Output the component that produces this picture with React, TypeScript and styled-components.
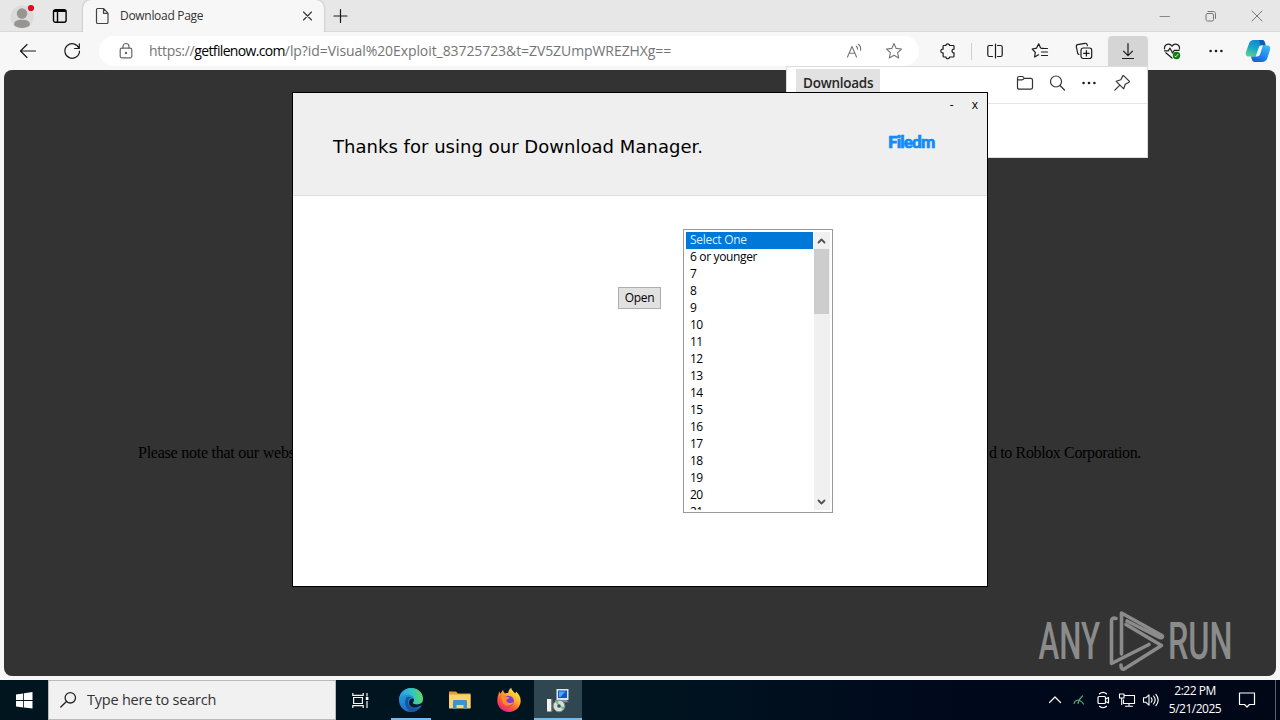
import React from "react";
import styled, { createGlobalStyle } from "styled-components";

const GlobalStyle = createGlobalStyle`
  * { box-sizing: border-box; }
  body { margin: 0; overflow: hidden; font-family: "Open Sans", "Noto Sans", sans-serif; }
`;

const Desktop = styled.div`
  position: relative;
  display: flex;
  flex-direction: column;
  width: 1280px;
  height: 720px;
  overflow: hidden;
  background: #f7f7f7;
`;

const TabStrip = styled.header`
  display: grid;
  grid-template-columns: 44px 32px 7px 241px 34px 1fr 46px 46px 46px;
  align-items: center;
  height: 32px;
  background: #e7e7e7;
  border-bottom: 1px solid #d9d9d9;
`;
const Cell = styled.div`
  display: flex;
  align-items: center;
  justify-content: center;
`;
const Tab = styled.div`
  display: flex;
  align-items: center;
  height: 32px;
  margin-bottom: -1px;
  padding: 0 10px 0 11px;
  gap: 9px;
  background: #f7f7f7;
  border-radius: 8px 8px 0 0;
  box-shadow: 0 0 2px rgba(0, 0, 0, 0.35);
  clip-path: inset(0 -3px 0 -3px);
`;
const TabTitle = styled.span`
  flex: 1;
  font-size: 12px;
  line-height: 16px;
  letter-spacing: -0.3px;
  color: #333;
  white-space: nowrap;
`;

const Toolbar = styled.nav`
  display: grid;
  grid-template-columns: 44px 44px 5px 820px 7px 44px 3px 44px 1px 44px 44px 2px 40px 2px 44px 44px 40px;
  align-items: center;
  height: 38px;
  padding-left: 6px;
  background: #f7f7f7;
`;
const AddressBar = styled.div`
  display: flex;
  align-items: center;
  height: 30px;
  padding: 0 16px 0 19px;
  background: #fff;
  border-radius: 15px;
`;
const Url = styled.span`
  flex: 1;
  margin-left: 15px;
  font-size: 14px;
  line-height: 20px;
  letter-spacing: -0.08px;
  color: #757575;
  white-space: nowrap;
`;
const Scheme = styled.span`
  letter-spacing: -0.3px;
`;
const Host = styled.span`
  letter-spacing: -0.66px;
  color: #000;
`;
const Divider = styled.div`
  width: 1px;
  height: 17px;
  background: #cfcfcf;
`;
const ActiveTool = styled(Cell)`
  height: 30px;
  background: #d5d5d5;
  border-radius: 4px 4px 0 0;
`;

const Viewport = styled.main`
  display: flex;
  align-items: flex-start;
  justify-content: space-between;
  width: 1272px;
  height: 606px;
  margin: 0 4px 4px;
  padding: 374px 135px 0 134px;
  background: #333;
  border-radius: 8px;
`;
const Notice = styled.span<{ $spacing: string }>`
  font-family: "Liberation Serif", serif;
  font-size: 16px;
  line-height: 18px;
  letter-spacing: ${(p) => p.$spacing};
  color: #000;
  white-space: nowrap;
`;

const Flyout = styled.section`
  position: absolute;
  left: 786px;
  top: 66px;
  width: 362px;
  height: 92px;
  background: #fff;
  border: 1px solid #dcdcdc;
`;
const FlyoutHeader = styled.div`
  display: grid;
  grid-template-columns: 84px 1fr 32px 32px 32px 33px;
  height: 37px;
  padding: 2px 9px 0 9px;
  border-bottom: 1px solid #e4e4e4;
`;
const FlyoutTitle = styled.h2`
  height: 30px;
  margin: 0;
  padding-left: 7px;
  background: #e2e2e2;
  color: #262626;
  font-size: 13.5px;
  font-weight: 600;
  letter-spacing: -0.25px;
  line-height: 28px;
`;
const FlyoutCell = styled(Cell)`
  height: 28px;
`;

const Dialog = styled.section`
  position: absolute;
  left: 292px;
  top: 92px;
  width: 696px;
  height: 495px;
  background: #fff;
  border: 1px solid #000;
`;
const DialogHeader = styled.header`
  display: flex;
  justify-content: space-between;
  height: 103px;
  padding-left: 40px;
  background: #efefef;
  border-bottom: 1px solid #dfdfdf;
`;
const Headline = styled.h1`
  margin: 42px 0 0;
  font-family: "DejaVu Sans", sans-serif;
  font-size: 18px;
  font-weight: 400;
  line-height: 24px;
  letter-spacing: 0.03px;
  color: #000;
  white-space: nowrap;
`;
const HeaderSide = styled.div`
  display: flex;
  flex-direction: column;
  width: 100px;
`;
const Controls = styled.div`
  display: flex;
  justify-content: flex-end;
  gap: 18px;
  padding: 4px 9px 0 0;
  font-size: 12px;
  line-height: 16px;
`;
const Brand = styled.div`
  margin: 18px 0 0 1px;
  font-family: "Lato", sans-serif;
  font-size: 17px;
  font-weight: 900;
  line-height: 22px;
  letter-spacing: -0.85px;
  color: #1389fb;
  -webkit-text-stroke: 0.7px #1389fb;
`;
const DialogBody = styled.div`
  display: flex;
  align-items: flex-start;
  padding: 33px 0 0 325px;
`;
const OpenButton = styled.button`
  width: 43px;
  height: 22px;
  margin: 58px 22px 0 0;
  padding: 0;
  background: #e1e1e1;
  border: 1px solid #adadad;
  color: #000;
  font-family: inherit;
  font-size: 12px;
  line-height: 18px;
  letter-spacing: -0.3px;
`;
const ListBox = styled.div`
  display: flex;
  justify-content: space-between;
  width: 150px;
  height: 284px;
  padding: 2px;
  background: #fff;
  border: 1px solid #9a9a9a;
`;
const Options = styled.div`
  width: 127px;
  height: 278px;
  overflow: hidden;
`;
const Option = styled.div<{ $selected?: boolean; $spacing?: string }>`
  height: 17px;
  padding-left: 4px;
  font-size: 12px;
  line-height: 15px;
  letter-spacing: ${(p) => p.$spacing ?? "-0.6px"};
  white-space: nowrap;
  background: ${(p) => (p.$selected ? "#0078d7" : "transparent")};
  color: ${(p) => (p.$selected ? "#d7efff" : "#000")};
`;
const Scrollbar = styled.div`
  display: flex;
  flex-direction: column;
  align-items: flex-start;
  justify-content: space-between;
  width: 16px;
  background: #f0f0f0;
`;
const Thumb = styled.div`
  width: 15px;
  height: 65px;
  background: #cdcdcd;
`;
const ScrollTop = styled.div`
  display: flex;
  flex-direction: column;
`;
const Arrow = styled.div`
  display: flex;
  align-items: center;
  justify-content: center;
  width: 15px;
  height: 17px;
`;

const Watermark = styled.div`
  position: absolute;
  left: 1036px;
  top: 606px;
`;

const Taskbar = styled.footer`
  display: flex;
  height: 40px;
  background: linear-gradient(90deg, #00151d 0%, #001520 48%, #00091c 75%, #000717 100%);
`;
const StartButton = styled(Cell)`
  width: 48px;
`;
const SearchBox = styled.div`
  display: flex;
  align-items: center;
  width: 288px;
  padding-left: 11px;
  background: #f1f1f1;
  border: 1px solid #b9b9b9;
  color: #333;
  font-size: 14.5px;
  line-height: 20px;
  letter-spacing: -0.23px;
  gap: 10px;
`;
const AppSlot = styled(Cell)<{ $w: number; $active?: boolean; $line?: string }>`
  width: ${(p) => p.$w}px;
  background-color: ${(p) => (p.$active ? "#304651" : "transparent")};
  background-image: ${(p) => (p.$line ? "linear-gradient(#76b9ed, #76b9ed)" : "none")};
  background-size: ${(p) => p.$line ?? "0"} 2px;
  background-repeat: no-repeat;
  background-position: center bottom;
`;
const Tray = styled.div`
  display: grid;
  grid-template-columns: 24px 24px 24px 24px 24px 64px 40px 13px;
  align-items: center;
  margin-left: auto;
`;
const Clock = styled.div`
  color: #fff;
  font-size: 12px;
  line-height: 18px;
  letter-spacing: -0.5px;
  text-align: center;
  white-space: nowrap;
`;
const ShowDesktop = styled.div`
  justify-self: end;
  width: 5px;
  height: 40px;
  border-left: 1px solid #59616c;
`;

type LineProps = {
  w?: number;
  h?: number;
  color?: string;
  sw?: number;
  children: React.ReactNode;
};
/* Line icon drawn at one unit per pixel. */
const Line = ({ w = 18, h = 18, color = "#1b1b1b", sw = 1.2, children }: LineProps) => (
  <svg width={w} height={h} viewBox={`0 0 ${w} ${h}`} fill="none" stroke={color} strokeWidth={sw} strokeLinecap="round" strokeLinejoin="round">
    {children}
  </svg>
);

const Dots = () => (
  <svg width="16" height="4" viewBox="0 0 16 4" fill="#1b1b1b">
    <circle cx="2.600" cy="2" r="1.300" />
    <circle cx="8" cy="2" r="1.300" />
    <circle cx="13.400" cy="2" r="1.300" />
  </svg>
);

const Avatar = () => (
  <svg width="26" height="26" viewBox="0 0 26 26">
    <circle cx="13" cy="14" r="11.500" fill="#dcdbda" />
    <circle cx="13" cy="10.500" r="5.200" fill="#989491" />
    <path d="M5 22c0-4 3-5.300 8-5.300s8 1.300 8 5.300c-2 2.300-5 3-8 3s-6-.7-8-3z" fill="#989491" />
    <circle cx="22" cy="5" r="3.100" fill="#e00b1c" />
  </svg>
);

const CopilotIcon = () => (
  <svg width="26" height="24" viewBox="0 0 26 24">
    <defs>
      <linearGradient id="cpA" x1="0.6" y1="0" x2="0.2" y2="1">
        <stop offset="0" stopColor="#1583d6" />
        <stop offset="0.5" stopColor="#16a9c8" />
        <stop offset="1" stopColor="#5fd08a" />
      </linearGradient>
      <linearGradient id="cpB" x1="0.8" y1="0" x2="0.2" y2="1">
        <stop offset="0" stopColor="#39b9f3" />
        <stop offset="0.6" stopColor="#1f7ff0" />
        <stop offset="1" stopColor="#0f62c8" />
      </linearGradient>
    </defs>
    <path d="M9 1h8c2 0 2.600 1.500 3 3l.6 2.500h-3.300c-2 0-2.800 1.200-3.300 3l-1.800 6c-.6 1.500-1.400 2-3 2H4c-3 0-3.700-2-3-4.500L4 4.500C4.800 2.200 6.500 1 9 1z" fill="url(#cpA)" />
    <path d="M14 1h3c2 0 2.600 1.500 3 3l.6 2.500h-5z" fill="#1359b8" />
    <path d="M17 23H10c-2 0-2.800-1.200-3.300-3L6 17.500h3.500c2 0 2.800-1.200 3.300-3l1.800-6c.5-1.500 1.300-2 2.900-2H22c3 0 3.700 2 3 4.500l-2.800 8.500C21.400 21.800 19.500 23 17 23z" fill="url(#cpB)" />
    <path d="M13.800 8.500c.5-1.500 1.500-2 3.200-2h.9l-2.600 8.300c-.6 1.900-1.500 2.700-3.300 2.700h-1.300z" fill="#eef8fc" />
  </svg>
);

const EdgeIcon = () => (
  <svg width="26" height="26" viewBox="0 0 26 26">
    <defs>
      <linearGradient id="edA" x1="0" y1="0.5" x2="1" y2="0.4">
        <stop offset="0" stopColor="#229bdc" />
        <stop offset="0.5" stopColor="#2fc0d0" />
        <stop offset="1" stopColor="#62d957" />
      </linearGradient>
      <linearGradient id="edB" x1="0.2" y1="0" x2="0.5" y2="1">
        <stop offset="0" stopColor="#2ba0e3" />
        <stop offset="1" stopColor="#1672c8" />
      </linearGradient>
    </defs>
    <circle cx="13" cy="13" r="12" fill="url(#edB)" />
    <path d="M1 12.500C1.600 6 6.500 1 13 1c7 0 12 5 12 10.500 0 3.700-2.800 6-6 6-2.400 0-4.200-.8-4.200-1.700 0-.7 1.200-1.100 1.200-3C16 10 13.500 7.500 9.500 7.500 5 7.500 1.800 10 1 12.500z" fill="url(#edA)" />
    <path d="M9 10C6 13 6 20 12 24.700c4 .3 7.500-1.300 9.500-3.700C16 22.500 10 20 10 15c0-2.600 1.500-4 3.500-4.500C12 9.500 10.500 9.500 9 10z" fill="#1a549f" />
    <path d="M15.500 11.800c-2.500-.8-4.500 1.200-4.500 4 0 3.500 3.800 5.500 8 4.500 2-.5 3.500-1.300 4.800-2l1.200-.4v-3.400c-1.300 2-3.500 3-6 3-2.400 0-4.200-.8-4.200-1.700 0-.7 1.200-1.100 1.200-3 0-.4-.1-.7-.5-1z" fill="#041c2b" />
  </svg>
);

const ExplorerIcon = () => (
  <svg width="22" height="20" viewBox="0 0 22 20">
    <path d="M0 1.500h7l2 2h12.500V18H0z" fill="#e0a233" />
    <path d="M0 4.500h21.500V18.500H0z" fill="#fbd56b" />
    <path d="M4 19v-7.500c0-1 .6-1.500 1.500-1.500h11c.9 0 1.500.5 1.500 1.500V19h-3.500v-4h-7v4z" fill="#3e92cf" />
  </svg>
);

const FirefoxIcon = () => (
  <svg width="26" height="26" viewBox="0 0 26 26">
    <defs>
      <linearGradient id="ffA" x1="0.85" y1="0.05" x2="0.2" y2="1">
        <stop offset="0" stopColor="#fff04a" />
        <stop offset="0.35" stopColor="#ffb52e" />
        <stop offset="0.65" stopColor="#ff5a36" />
        <stop offset="1" stopColor="#e9158a" />
      </linearGradient>
    </defs>
    <path d="M3.500 4.500c.5 1.200.8 1.800 1 2.300L7 2.800c.3 1.600 1 3 2.200 3.700 1-.4 2-.5 3-.5.300-2.500 1.500-4.300 3-5.300.2 2.700 2.300 3.700 4.300 5.800L20 4.500c3 2.500 4.700 5.500 4.700 9.300C24.700 20 19.700 25 13 25S1.300 20 1.300 13.800c0-3.800 1-6.800 2.200-9.300z" fill="url(#ffA)" />
    <circle cx="12.600" cy="14" r="5.300" fill="#7a3bd8" />
    <path d="M5 10c2-1.500 4.500-1.300 5.500-.3l3 .5c-.2 1.600-2.500 1.800-3 2.300-.2 2 .7 3.500 3 3.500 1.800 0 2.500-1 4-.8-1 3.800-7.500 5.300-10.500 1z" fill="#ff8a2c" />
  </svg>
);

const SetupIcon = () => (
  <svg width="24" height="26" viewBox="0 0 24 26">
    <rect x="10.500" y="2" width="12" height="11" fill="#dfe5ea" />
    <rect x="12" y="3.500" width="9" height="7.500" fill="#0f57c9" />
    <path d="M13 4.500h6.500l-5 5.500H13z" fill="#4fa5f5" />
    <path d="M9 13.500h12l2 2.500H9z" fill="#c5cbd0" />
    <path d="M16 14.500h7v1.500h-7z" fill="#4a545c" />
    <rect x="1" y="12" width="4.500" height="12.500" fill="#f3f1ec" />
    <path d="M6 12v12.500" stroke="#6d6e72" />
    <circle cx="13" cy="19" r="5.800" fill="#d4dfd9" stroke="#7b8b86" />
    <path d="M13 19 9 15a5.500 5.500 0 0 1 3-1.500zM13 19l4 4a5.500 5.500 0 0 0 1.500-3z" fill="#77bb8d" />
    <circle cx="13" cy="19" r="1.800" fill="#3a5058" />
  </svg>
);

const STAR = "M9 1.500l2.200 4.900 5.300.6-3.900 3.600 1.100 5.300L9 13.200l-4.700 2.700 1.100-5.300L1.500 7l5.300-.6z";

const OPTIONS = ["7", "8", "9", "10", "11", "12", "13", "14", "15", "16", "17", "18", "19", "20", "21"];

const AddressActions = styled.div`
  display: flex;
  gap: 22px;
`;

export default function App() {
  return (
    <Desktop>
      <GlobalStyle />
      <TabStrip>
        <Cell><Avatar /></Cell>
        <Cell>
          <Line w={16} h={16}>
            <rect x="1.500" y="1.700" width="12.600" height="12.600" rx="2" stroke="#000" strokeWidth="1.400" />
            <path d="M2.500 3h10.600" stroke="#000" strokeWidth="2.200" />
            <path d="M5.500 4v10" stroke="#000" strokeWidth="1.400" />
          </Line>
        </Cell>
        <span />
        <Tab>
          <Line w={17} h={18} color="#444">
            <path d="M3.500 1.500h6l4.500 4.700v9c0 .8-.5 1.300-1.300 1.300H3.800c-.8 0-1.300-.5-1.300-1.300V2.800c0-.8.3-1.300 1-1.300zM9.500 1.700v4.600H14" />
          </Line>
          <TabTitle>Download Page</TabTitle>
          <Line w={13} h={12} color="#333" sw={1.1}><path d="M2.500 2l8 8M10.500 2l-8 8" /></Line>
        </Tab>
        <Cell><Line w={16} h={16}><path d="M7.500 1.500v13M1 8h13" /></Line></Cell>
        <span />
        <Cell><Line w={12} h={12} color="#888" sw={1}><path d="M1 6.500h9.500" /></Line></Cell>
        <Cell><Line w={12} h={12} color="#777" sw={1}><rect x="1" y="3.500" width="7.500" height="7.500" rx="1.500" /><path d="M3 1.500h5.500c1.200 0 2 .8 2 2v5" /></Line></Cell>
        <Cell><Line w={12} h={12} color="#777" sw={1}><path d="M1 1l10 10M11 1L1 11" /></Line></Cell>
      </TabStrip>

      <Toolbar>
        <Cell><Line><path d="M16.500 9H1.500M8 2.500L1.500 9 8 15.500" /></Line></Cell>
        <Cell><Line><path d="M16 6.300A7.300 7.300 0 1 0 16.500 9M16.300 1.800v4.700h-4.700" /></Line></Cell>
        <span />
        <AddressBar>
          <Line w={16} h={18} color="#666">
            <rect x="2.200" y="6.200" width="11.600" height="9.600" rx="1.500" />
            <path d="M5 6V4.500a3 3 0 0 1 6 0V6" />
            <circle cx="8" cy="11" r="0.600" fill="#666" />
          </Line>
          <Url><Scheme>https://</Scheme><Host>getfilenow.com</Host>/lp?id=Visual%20Exploit_83725723&amp;t=ZV5ZUmpWREZHXg==</Url>
          <AddressActions>
            <Line color="#757575" sw={1.1}>
              <path d="M2.500 15L7 4.500 11.500 15M4.100 11.300h5.800M11.300 4.300c1 .8 1.400 1.900 1.200 3M13.300 2.300c2 1.500 2.700 3.700 2.200 6" />
            </Line>
            <Line color="#757575" sw={1.1}><path d={STAR} /></Line>
          </AddressActions>
        </AddressBar>
        <span />
        <Cell>
          <Line>
            <path d="M5 3.500h2c-.3-2.300 3.700-2.300 3.500 0h3.700c.5 0 .8.300.8.800v2.900c-2.600-.4-2.600 4 0 3.600v3.400c0 .5-.3.800-.8.800h-3.700c.2 2.300-3.800 2.300-3.500 0H5c-.6 0-.9-.3-.9-.8v-3.400c-3 .4-3-4 0-3.600V4.300c0-.5.3-.8.900-.8z" />
          </Line>
        </Cell>
        <Cell><Divider /></Cell>
        <Cell>
          <Line><path d="M6.500 3.500H3.300c-1 0-1.500.5-1.500 1.500v8c0 1 .5 1.500 1.500 1.500h3.200M11.500 3.500h3.200c1 0 1.500.5 1.500 1.500v8c0 1-.5 1.500-1.500 1.500h-3.200M9.500 2v14" /></Line>
        </Cell>
        <span />
        <Cell>
          <Line><path d="M12.500 6.300L9.600 6 7.700 1.800 5.500 6.200 1.200 7l3.100 3.300-.7 4.700 4-2.200M10.500 6.500h6M10.500 10h6M10.500 13.500h6" /></Line>
        </Cell>
        <Cell>
          <Line>
            <rect x="6" y="6" width="10.700" height="10.500" rx="2.200" />
            <path d="M11.400 8.500v5.500M8.600 11.300h5.600M4 12.500c-.8-.2-1.200-.7-1.400-1.500L1.300 4.600c-.2-1 .3-1.700 1.300-1.900l7.500-1.400c1-.2 1.800.4 2 1.400l.2 1" />
          </Line>
        </Cell>
        <span />
        <ActiveTool><Line><path d="M9 1.500v12M4.500 9.200L9 13.700l4.500-4.500M3.500 16.500h11" /></Line></ActiveTool>
        <span />
        <Cell>
          <Line>
            <path d="M1.500 6.800c-.4-5 5.300-6 7.500-2.500 2.200-3.500 7.900-2.500 7.500 2.500M2.800 10.800L9 16M1.500 8.800h3.700l1.800-2.600L9.600 11l1.700-2.700h4.900" />
            <circle cx="13.500" cy="13.500" r="3.700" fill="#107c10" stroke="none" />
            <path d="M12 14.200l.9.600 2-2.400" stroke="#fff" strokeWidth="0.900" />
          </Line>
        </Cell>
        <Cell><Dots /></Cell>
        <Cell><CopilotIcon /></Cell>
      </Toolbar>

      <Viewport>
        <Notice $spacing="-0.24px">Please note that our webs</Notice>
        <Notice $spacing="-0.37px">d to Roblox Corporation.</Notice>
      </Viewport>

      <Taskbar>
        <StartButton>
          <svg width="17" height="17" viewBox="0 0 17 17" fill="#fff">
            <path d="M0 2.500L7.200 1.400V8H0zM8 1.300L16.500 0v8H8zM0 8.900h7.200v6.600L0 14.500zM8 8.900h8.500V16.500l-8.500-1z" />
          </svg>
        </StartButton>
        <SearchBox>
          <Line w={17} h={18} color="#222" sw={1.3}><circle cx="10.300" cy="6.800" r="5.200" /><path d="M6.500 10.500L.8 16" /></Line>
          Type here to search
        </SearchBox>
        <AppSlot $w={49}>
          <svg width="17" height="17" viewBox="0 0 17 17" fill="none" stroke="#f4f4f4" strokeWidth="1.200">
            <path d="M.8 1v2.300h10.400V1M.8 16v-2.300h10.400V16M1.600 5.500h8.800v6H1.600zM15 1v3.500M15 9v7" />
            <rect x="13.800" y="5" width="2.600" height="3" fill="#fff" stroke="none" />
          </svg>
        </AppSlot>
        <AppSlot $w={52} $line="40px"><EdgeIcon /></AppSlot>
        <AppSlot $w={46}><ExplorerIcon /></AppSlot>
        <AppSlot $w={51}><FirefoxIcon /></AppSlot>
        <AppSlot $w={48} $active $line="48px"><SetupIcon /></AppSlot>
        <Tray>
          <Cell><Line w={14} h={10} color="#fff" sw={1.2}><path d="M1.500 7.500L7 2l5.500 5.500" /></Line></Cell>
          <Cell>
            <Line w={14} h={14} color="#57a773" sw={1.2}><path d="M2 10.500c.5-2 2.500-3.500 4.500-3.200M6 10.500l1-3.500 3.500-4M7.500 7.500c1.500.5 3 1.500 4 3.500" /></Line>
          </Cell>
          <Cell>
            <Line w={14} h={18} color="#fff" sw={1.2}><rect x="2" y="5.500" width="7.500" height="7" rx="1" /><path d="M9.500 8l3-1.500v5.500l-3-1.500M3.500 2.800c2-1.600 5-1.600 7 0M3.500 15.300c2 1.600 5 1.600 7 0" /></Line>
          </Cell>
          <Cell>
            <Line w={18} h={16} color="#fff" sw={1.1}><path d="M6.500 3.500h10v8h-11V8M11 11.500v2.500M7.500 14.300h7M1.500 2h4.500v4H1.500zM3.700 6v6.500" /></Line>
          </Cell>
          <Cell>
            <Line w={18} h={16} color="#fff" sw={1.1}><path d="M1.500 5.800h2.200L7 2.800v10.400l-3.300-3H1.500zM9.200 5.800c1 1.300 1 3.100 0 4.400M11.500 4c2 2.400 2 5.600 0 8M13.900 2.300c2.800 3.500 2.800 7.900 0 11.400" /></Line>
          </Cell>
          <Clock>2:22 PM<br />5/21/2025</Clock>
          <Cell>
            <Line w={18} h={18} color="#fff" sw={1.2}><path d="M1.500 2h15v11.500h-5L9 16l-2.500-2.500h-5z" /></Line>
          </Cell>
          <ShowDesktop />
        </Tray>
      </Taskbar>

      <Flyout>
        <FlyoutHeader>
          <FlyoutTitle>Downloads</FlyoutTitle>
          <span />
          <FlyoutCell><Line color="#333"><path d="M1.500 4.300c0-1.300.5-1.800 1.700-1.800H6c.8 0 1.200.3 1.700 1l.6.800h6.500c1.200 0 1.700.5 1.700 1.700v7.500c0 1.200-.5 1.700-1.700 1.700H3.200c-1.200 0-1.700-.5-1.700-1.700zM1.500 5.800H6c1 0 1.500-.6 2.200-1.500" /></Line></FlyoutCell>
          <FlyoutCell><Line w={17} color="#333"><circle cx="7" cy="7.500" r="5.500" /><path d="M11 11.500l4.500 4.500" /></Line></FlyoutCell>
          <FlyoutCell><Dots /></FlyoutCell>
          <FlyoutCell><Line color="#333"><path d="M10.800 1.800l5.400 5.400c.3.400.2.900-.3 1.100l-3.600 1.900-1.600 4.600-7.500-7.500 4.600-1.600 1.900-3.600c.3-.5.700-.6 1.100-.3zM6.900 11.100L1.800 16.200" /></Line></FlyoutCell>
        </FlyoutHeader>
      </Flyout>

      <Watermark>
        <svg width="204" height="70" viewBox="0 0 204 70" fill="#8b8b8b">
          <text x="2.500" y="53" fontFamily="Roboto, sans-serif" fontSize="51" fontWeight="500" textLength="61.500" lengthAdjust="spacingAndGlyphs">ANY</text>
          <text x="132" y="53" fontFamily="Roboto, sans-serif" fontSize="51" fontWeight="500" textLength="64.500" lengthAdjust="spacingAndGlyphs">RUN</text>
          <g fill="none" stroke="#8b8b8b" strokeWidth="3.600" strokeLinejoin="round" strokeLinecap="round">
            <path d="M85.500 48V7L126 29.500c1.500 1.500-.5 3-3.500 1.500L91 15" />
            <path d="M80 12.500c-3-1-4.500 0-4.500 3v42L113 38.500" />
            <path d="M85 59c-.3 3.500 1.500 5 4 3.500L125.500 39.500 90 18.500" />
          </g>
        </svg>
      </Watermark>

      <Dialog>
        <DialogHeader>
          <Headline>Thanks for using our Download Manager.</Headline>
          <HeaderSide>
            <Controls><span>-</span><span>x</span></Controls>
            <Brand>Filedm</Brand>
          </HeaderSide>
        </DialogHeader>
        <DialogBody>
          <OpenButton>Open</OpenButton>
          <ListBox>
            <Options>
              <Option $selected $spacing="-0.3px">Select One</Option>
              <Option $spacing="-0.35px">6 or younger</Option>
              {OPTIONS.map((o) => <Option key={o}>{o}</Option>)}
            </Options>
            <Scrollbar>
              <ScrollTop>
                <Arrow><Line w={11} h={8} color="#505050" sw={1.8}><path d="M2.500 5.500l3-3 3 3" /></Line></Arrow>
                <Thumb />
              </ScrollTop>
              <Arrow><Line w={11} h={8} color="#505050" sw={1.8}><path d="M2.500 2.500l3 3 3-3" /></Line></Arrow>
            </Scrollbar>
          </ListBox>
        </DialogBody>
      </Dialog>
    </Desktop>
  );
}
